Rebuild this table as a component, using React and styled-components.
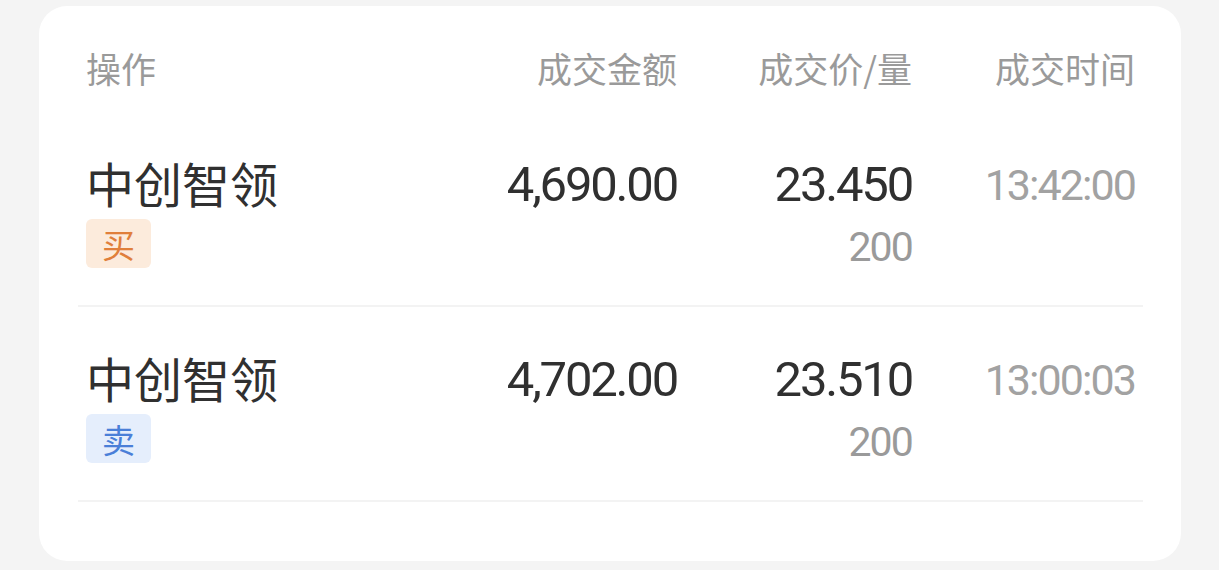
import React from 'react'
import styled, { createGlobalStyle } from 'styled-components'

const GlobalStyle = createGlobalStyle`
  html, body {
    margin: 0;
    padding: 0;
    background: #f4f4f4;
  }
  body {
    font-family: "Noto Sans CJK SC", Roboto, sans-serif;
  }
`

const Page = styled.div`
  padding: 6px 38px 9px 39px;
`

const Card = styled.div`
  background: #ffffff;
  border-radius: 28px;
  height: 555px;
  padding: 38px 38px 0 39px;
  box-sizing: border-box;
`

const Grid = styled.div`
  display: grid;
  grid-template-columns: 1fr 257px 235px 223px;
  padding: 0 8px;
`

const Header = styled(Grid)`
  padding-bottom: 20px;
`

const HeadCell = styled.div`
  font-size: 35px;
  line-height: 48px;
  color: #9a9a9a;
  text-align: ${p => (p.$left ? 'left' : 'right')};
`

const Row = styled(Grid)`
  padding-top: 42px;
  padding-bottom: 33px;
  border-bottom: 2px solid #f3f3f3;
`

const NameCell = styled.div`
  display: flex;
  flex-direction: column;
  align-items: flex-start;
`

const Name = styled.div`
  font-size: 48px;
  line-height: 56px;
  color: #303030;
`

const Badge = styled.span`
  margin-top: 9px;
  width: 65px;
  height: 49px;
  border-radius: 6px;
  display: flex;
  align-items: center;
  justify-content: center;
  font-size: 33px;
  background: ${p => (p.$side === 'buy' ? '#fcebdc' : '#e5eefc')};
  color: ${p => (p.$side === 'buy' ? '#e07f3b' : '#4a7fd8')};
`

const NumCell = styled.div`
  text-align: right;
  padding-top: 3px;
  font-family: Roboto, "Noto Sans CJK SC", sans-serif;
`

const Value = styled.div`
  font-size: ${p => p.$size || 49}px;
  line-height: 56px;
  letter-spacing: -0.045em;
  color: ${p => (p.$muted ? '#a2a2a2' : '#303030')};
`

const Qty = styled.div`
  margin-top: 9px;
  font-size: 41px;
  line-height: 50px;
  letter-spacing: -0.045em;
  color: #9a9a9a;
`

const trades = [
  { name: '中创智领', side: 'buy', amount: '4,690.00', price: '23.450', qty: '200', time: '13:42:00' },
  { name: '中创智领', side: 'sell', amount: '4,702.00', price: '23.510', qty: '200', time: '13:00:03' },
]

export default function App() {
  return (
    <Page>
      <GlobalStyle />
      <Card>
        <Header>
          <HeadCell $left>操作</HeadCell>
          <HeadCell>成交金额</HeadCell>
          <HeadCell>成交价/量</HeadCell>
          <HeadCell>成交时间</HeadCell>
        </Header>
        {trades.map((t, i) => (
          <Row key={i}>
            <NameCell>
              <Name>{t.name}</Name>
              <Badge $side={t.side}>{t.side === 'buy' ? '买' : '卖'}</Badge>
            </NameCell>
            <NumCell>
              <Value>{t.amount}</Value>
            </NumCell>
            <NumCell>
              <Value>{t.price}</Value>
              <Qty>{t.qty}</Qty>
            </NumCell>
            <NumCell>
              <Value $muted $size={43}>{t.time}</Value>
            </NumCell>
          </Row>
        ))}
      </Card>
    </Page>
  )
}
